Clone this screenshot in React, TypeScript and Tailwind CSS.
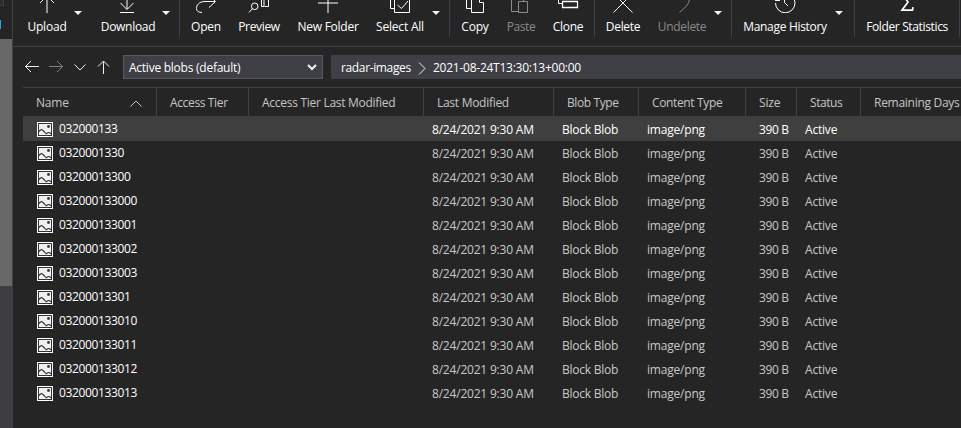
import { ReactNode } from "react"
import clsx from "clsx"

const COLUMNS = [
  { label: "Name", className: "w-[134px] pl-[13px] tracking-[-0.2px]", sorted: true },
  { label: "Access Tier", className: "w-[92px] pl-[13px] tracking-[-0.36px]" },
  { label: "Access Tier Last Modified", className: "w-[175px] pl-[13px] tracking-[-0.28px]" },
  { label: "Last Modified", className: "w-[130px] pl-[13px] tracking-[-0.28px]" },
  { label: "Blob Type", className: "w-[85px] pl-[13px] tracking-[-0.4px]" },
  { label: "Content Type", className: "w-[107px] pl-[13px] tracking-[-0.36px]" },
  { label: "Size", className: "w-[51px] pl-[13px] tracking-[-0.2px]" },
  { label: "Status", className: "w-[64px] pl-[13px] tracking-[-0.45px]" },
  { label: "Remaining Days", className: "w-[120px] pl-[13px] tracking-[-0.28px]" },
]

const BLOBS = [
  "032000133",
  "0320001330",
  "03200013300",
  "032000133000",
  "032000133001",
  "032000133002",
  "032000133003",
  "03200013301",
  "032000133010",
  "032000133011",
  "032000133012",
  "032000133013",
]

function Icon({ children, className }: { children: ReactNode; className?: string }) {
  return (
    <svg
      width="24"
      height="24"
      viewBox="0 0 24 24"
      fill="none"
      stroke="currentColor"
      strokeWidth="1"
      className={clsx("shrink-0", className)}
    >
      {children}
    </svg>
  )
}

function ToolButton({
  label,
  icon,
  className,
  disabled,
}: {
  label: string
  icon: ReactNode
  className: string
  disabled?: boolean
}) {
  return (
    <button
      className={clsx(
        "flex shrink-0 flex-col items-center whitespace-nowrap",
        disabled ? "text-[#8a8a8a]" : "text-white",
        className
      )}
    >
      {icon}
      <span className="mt-[6px] leading-4">{label}</span>
    </button>
  )
}

function Caret({ className }: { className: string }) {
  return (
    <svg width="8" height="4" viewBox="0 0 8 4" fill="#f1f1f1" className={clsx("mt-[22px] shrink-0", className)}>
      <path d="M0 0h8L4 4z" />
    </svg>
  )
}

function Divider() {
  return <div className="h-[48px] w-px shrink-0 bg-[#3f3f46]" />
}

function ImageIcon() {
  return (
    <svg width="16" height="15" viewBox="0 0 16 15" className="shrink-0">
      <rect width="16" height="15" fill="#ffffff" />
      <rect x="1.5" y="1.5" width="13" height="12" fill="#f0eff1" stroke="#333" />
      <circle cx="11.5" cy="4.5" r="1.4" fill="#333" />
      <path
        d="M2 9.500L3.500 8Q4.500 7 5.500 8L8.500 11.200Q9.500 12.200 10.500 11Q12 9.800 14 11.800"
        fill="none"
        stroke="#333"
        strokeWidth="1.1"
      />
    </svg>
  )
}

export default function App() {
  return (
    <div className="flex h-[428px] w-[961px] overflow-hidden bg-[#252526] font-['Open_Sans','Noto_Sans',sans-serif] text-[12px] text-white">
      <aside className="flex w-[12px] shrink-0 flex-col bg-[#3e3e42]">
        <div className="flex h-[39px] flex-col items-start bg-[#252526]">
          <div className="h-[6px] w-[4px] border-r border-b border-[#3f3f46] bg-[#2d2d30]" />
          <div className="mt-[14px] h-[9px] w-px bg-[#10b0e6]" />
        </div>
        <div className="h-[247px] bg-[#686868]" />
      </aside>

      <main className="flex min-w-0 flex-1 flex-col border-l border-[#3f3f46]">
        <div className="flex h-[47px] shrink-0 items-start overflow-hidden border-b border-[#3f3f46]">
          <div className="-mt-[11px] flex h-[48px] shrink-0">
            <ToolButton
              label="Upload"
              className="ml-[14px] w-[40px] tracking-[-0.2px]"
              icon={<Icon><path d="M12 24V7M5 14l7-7 7 7" /></Icon>}
            />
            <Caret className="ml-[7px]" />
            <ToolButton
              label="Download"
              className="ml-[18px] w-[56px] tracking-[-0.3px]"
              icon={<Icon><path d="M11 4v16M4.500 14l6.500 6.500 6.500-6.500M4 23.500h14" /></Icon>}
            />
            <Caret className="mr-[9px] ml-[6px]" />
            <Divider />
            <ToolButton
              label="Open"
              className="ml-[11px] w-[30px] tracking-[-0.2px]"
              icon={<Icon><path d="M8 23.500C4.500 23.500 2.500 22 2.500 19.500C2.500 16 5 12.500 11 12.500H21M15 6l6.500 6.500L15 18.500" /></Icon>}
            />
            <ToolButton
              label="Preview"
              className="ml-[14px] w-[48px] tracking-[-0.35px]"
              icon={<Icon><circle cx="7.7" cy="17.3" r="3.3" /><path d="M5.300 19.700L2 23.500M14.500 8v9.500h2.500V8M17.500 17.500h4V8" /></Icon>}
            />
            <ToolButton
              label="New Folder"
              className="ml-[14px] w-[62px] tracking-[-0.25px]"
              icon={<Icon><path d="M12 4v20M2 14h20" /></Icon>}
            />
            <ToolButton
              label="Select All"
              className="ml-[16px] w-[50px] tracking-[-0.2px]"
              icon={<Icon><path d="M6.500 5v18.500h15V5M6 19.500H2.500V5M9.500 16l4 3.500 6.500-7.500" /></Icon>}
            />
            <Caret className="mr-[9px] ml-[7px]" />
            <Divider />
            <ToolButton
              label="Copy"
              className="ml-[10px] w-[30px] tracking-[-0.2px]"
              icon={<Icon><path d="M8 19.500H3.500V5M8.500 5v18.500h12V13.500h-4V5" /></Icon>}
            />
            <ToolButton
              label="Paste"
              className="ml-[16px] w-[30px] tracking-[-0.45px]"
              disabled
              icon={<Icon><path d="M9 22.500H2.500V5M14.500 5v7M9.500 12.500h9v11h-9z" /></Icon>}
            />
            <ToolButton
              label="Clone"
              className="ml-[16px] w-[32px] tracking-[-0.3px]"
              icon={<Icon><path d="M6 14.500H2.500V8h15" /><path d="M6.500 13v5.500h15V13M6 12.500h16" strokeWidth="1.300" /></Icon>}
            />
            <div className="w-[10px]" />
            <Divider />
            <ToolButton
              label="Delete"
              className="ml-[10px] w-[36px] tracking-[-0.3px]"
              icon={<Icon><path d="M2.500 23.500L22 4M21.500 23.500L2 4" /></Icon>}
            />
            <ToolButton
              label="Undelete"
              className="ml-[16px] w-[50px] tracking-[-0.3px]"
              disabled
              icon={<Icon><path d="M9.500 23.500L16 17.500Q19.500 14 19.500 10" /></Icon>}
            />
            <Caret className="mr-[9px] ml-[7px]" />
            <Divider />
            <ToolButton
              label="Manage History"
              className="ml-[10px] w-[86px] tracking-[-0.3px]"
              icon={<Icon><path d="M2.500 14a9.750 9.750 0 1 0 9.750-9.750M2 11.500h5M11.500 8v5.500l3.500 3.500" /></Icon>}
            />
            <Caret className="mr-[11px] ml-[7px]" />
            <Divider />
            <ToolButton
              label="Folder Statistics"
              className="ml-[10px] w-[84px] tracking-[-0.36px]"
              icon={<Icon><path d="M18 8V5H7l6 8-6 8.200H17.500l.5-3" strokeWidth="1.700" /></Icon>}
            />
            <div className="w-[10px]" />
            <Divider />
          </div>
        </div>

        <div className="flex h-[40px] shrink-0 items-center pl-[10px]">
          <svg width="90" height="20" viewBox="0 0 90 20" fill="none" stroke="#f1f1f1" className="mr-[10px]">
            <path d="M16 9.500H2.500M8 4L2.500 9.500 8 15" />
            <path d="M26 9.500h13.500M34 4l5.500 5.500L34 15" stroke="#808080" />
            <path d="M51.500 7.500l5.500 5.500 5.500-5.500M80.500 17V4M75 9.500L80.500 4 86 9.500" />
          </svg>
          <div className="flex h-[24px] w-[200px] shrink-0 items-center justify-between border border-[#5a5a5e] bg-[#3f3f46] px-[5px]">
            <span className="pt-[2px] tracking-[-0.25px]">Active blobs (default)</span>
            <svg width="10" height="7" viewBox="0 0 10 7" fill="none" stroke="#f1f1f1" strokeWidth="2">
              <path d="M1 1l4 4 4-4" />
            </svg>
          </div>
          <div className="ml-[8px] flex h-[24px] flex-1 items-center bg-[#3f3f46] pl-[10px]">
            <span className="w-[77px] pt-[2px] tracking-[-0.36px] whitespace-nowrap">radar-images</span>
            <svg width="8" height="13" viewBox="0 0 8 13" fill="none" stroke="#f1f1f1" className="mt-[2px]">
              <path d="M1 .5l6 6-6 6" />
            </svg>
            <span className="ml-[7px] pt-[2px] tracking-[-0.25px] whitespace-nowrap">2021-08-24T13:30:13+00:00</span>
          </div>
        </div>

        <div className="ml-[10px] flex min-w-0 flex-1 flex-col overflow-hidden border-t border-[#3f3f46]">
          <div className="flex h-[28px] shrink-0 text-[#c5c5c5]">
            {COLUMNS.map((col) => (
              <div
                key={col.label}
                className={clsx(
                  "flex shrink-0 items-center justify-between border-r border-[#3f3f46] pt-[2px] pr-[14px] whitespace-nowrap",
                  col.className
                )}
              >
                {col.label}
                {col.sorted && (
                  <svg width="12" height="7" viewBox="0 0 12 7" fill="none" stroke="#c5c5c5">
                    <path d="M.5 6.500L6 1l5.500 5.500" />
                  </svg>
                )}
              </div>
            ))}
          </div>
          {BLOBS.map((name, i) => (
            <div
              key={name}
              className={clsx(
                "flex shrink-0 items-start pl-[14px] leading-[18px] whitespace-nowrap",
                i === 0 ? "h-[25px] bg-[#3f3f40] pt-[6px] text-white" : "h-[24px] pt-[5px] text-[#c8c8c8]"
              )}
            >
              <ImageIcon />
              <span className="-mt-[2px] ml-[6px] w-[373px] tracking-[-0.36px] text-white">{name}</span>
              <div className="-mt-px flex">
                <span className="w-[130px] tracking-[-0.2px]">8/24/2021 9:30 AM</span>
                <span className="w-[85px] tracking-[-0.25px]">Block Blob</span>
                <span className="w-[112px] tracking-[-0.2px]">image/png</span>
                <span className="w-[46px] tracking-[-0.35px]">390 B</span>
                <span className="tracking-[-0.2px]">Active</span>
              </div>
            </div>
          ))}
        </div>
      </main>
    </div>
  )
}
